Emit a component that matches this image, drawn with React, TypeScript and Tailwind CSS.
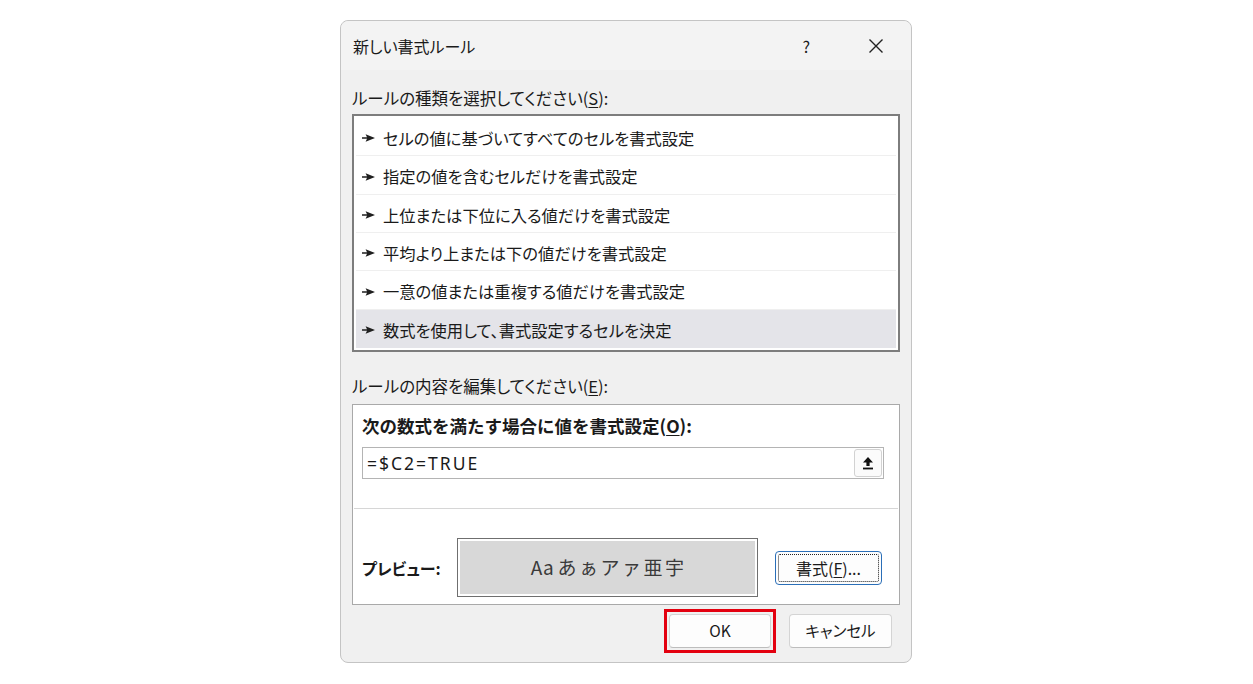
import React from 'react';

const font = { fontFamily: '"Noto Sans CJK JP", "Noto Sans", sans-serif' };

const ruleTypes = [
  'セルの値に基づいてすべてのセルを書式設定',
  '指定の値を含むセルだけを書式設定',
  '上位または下位に入る値だけを書式設定',
  '平均より上または下の値だけを書式設定',
  '一意の値または重複する値だけを書式設定',
  '数式を使用して、書式設定するセルを決定',
];

const Arrow: React.FC = () => (
  <svg width="13" height="8" viewBox="0 0 13 8" className="shrink-0">
    <polygon points="0,3.2 5,3.2 3.6,0.3 13,4 3.6,7.7 5,4.8 0,4.8" fill="#1f1f1f" />
  </svg>
);

const App: React.FC = () => {
  const selected = 5;

  return (
    <div className="w-[1253px] h-[684px] bg-white pt-[20px] [font-feature-settings:'palt']" style={font}>
      <div className="w-[572px] h-[643px] ml-[340px] bg-[#f0f0f0] border border-[#c4c4c4] rounded-[8px] flex flex-col text-[#1a1a1a]">
        {/* title bar */}
        <div className="h-[49px] flex items-center pl-[12px] bg-[#f3f3f3] rounded-t-[8px]">
          <span className="text-[16px]">新しい書式ルール</span>
          <span className="ml-auto text-[16px] mr-[58px]">?</span>
          <svg width="16" height="16" viewBox="0 0 16 16" className="mr-[27px]">
            <path d="M1.5 1.5 L14.5 14.5 M14.5 1.5 L1.5 14.5" stroke="#222" strokeWidth="1.4" />
          </svg>
        </div>

        <div className="px-[11px] flex flex-col">
          <div className="h-[44px] flex items-end pb-[3px] text-[16.5px]">
            ルールの種類を選択してください(<span className="underline underline-offset-2">S</span>):
          </div>

          <div className="h-[238px] bg-white border-2 border-[#7d7d7d] p-[2px] flex flex-col">
            {ruleTypes.map((t, i) => (
              <div
                key={t}
                className={`h-[39px] flex items-center gap-[8px] pl-[6px] pt-[3px] text-[16.3px] ${
                  i === selected ? 'bg-[#e4e4e9]' : ''
                } ${i < ruleTypes.length - 1 ? 'border-b border-[#efefef]' : ''}`}
              >
                <Arrow />
                <span>{t}</span>
              </div>
            ))}
          </div>

          <div className="h-[52px] flex items-center pt-[16px] text-[16.5px]">
            ルールの内容を編集してください(<span className="underline underline-offset-2">E</span>):
          </div>

          <div className="h-[201px] bg-white border border-[#a9a9a9] flex flex-col">
            <div className="pl-[9px] pr-[15px] pt-[10px]">
              <div className="text-[17.5px] font-bold h-[22px] flex items-center [font-feature-settings:normal]">
                次の数式を満たす場合に値を書式設定(<span className="underline underline-offset-2">O</span>):
              </div>
              <div className="mt-[10px] h-[32px] border border-[#b4b4b4] flex items-center pl-[4px] pr-[1px]">
                <span className="text-[17.5px] tracking-[2px]" style={{ fontFamily: '"Noto Sans", "Noto Sans CJK JP", sans-serif' }}>=$C2=TRUE</span>
                <div className="ml-auto w-[28px] h-[28px] border border-[#d2d2d2] rounded-[3px] bg-[#fbfbfb] flex items-center justify-center">
                  <svg width="12" height="14" viewBox="0 0 12 14">
                    <path d="M6 1 L11 6.5 L7.6 6.5 L7.6 10 L4.4 10 L4.4 6.5 L1 6.5 Z" fill="#111" />
                    <rect x="1" y="11.6" width="10" height="1.8" fill="#111" />
                  </svg>
                </div>
              </div>
            </div>
            <div className="mt-[29px] mx-[1px] border-t border-[#d6d6d6]" />
            <div className="flex items-center pl-[9px] mt-[29px]">
              <span className="text-[16px] font-bold w-[95px]">プレビュー:</span>
              <div className="w-[301px] h-[59px] border border-[#6f6f6f] p-[2px] bg-white">
                <div className="w-full h-full bg-[#d8d8d8] flex items-center justify-center text-[19px] text-[#3a3a3a] [font-feature-settings:normal]">
                  <span>Aa</span>
                  <span className="tracking-[2.5px] ml-[4px] mr-[-2.5px]">あぁアァ亜宇</span>
                </div>
              </div>
              <div className="ml-[17px] w-[107px] h-[34px] border border-[#2b6fb8] rounded-[4px] bg-[#fdfdfd] p-[2px]">
                <div className="w-full h-full border border-dotted border-[#222] rounded-[2px] flex items-center justify-center text-[16px]">
                  書式(<span className="underline underline-offset-2">F</span>)...
                </div>
              </div>
            </div>
          </div>
        </div>

        <div className="flex justify-end items-center mt-[4px] pr-[19px] gap-[13px]">
          <div className="border-[3px] border-[#e3000f] p-[2px]">
            <button className="w-[102px] h-[34px] bg-[#fdfdfd] border border-[#d4d4d4] border-b-[#bdbdbd] rounded-[4px] text-[15.5px]">
              OK
            </button>
          </div>
          <button className="w-[103px] h-[34px] bg-[#fdfdfd] border border-[#d4d4d4] border-b-[#bdbdbd] rounded-[4px] text-[15.5px]">
            キャンセル
          </button>
        </div>
      </div>
    </div>
  );
};

export default App;
